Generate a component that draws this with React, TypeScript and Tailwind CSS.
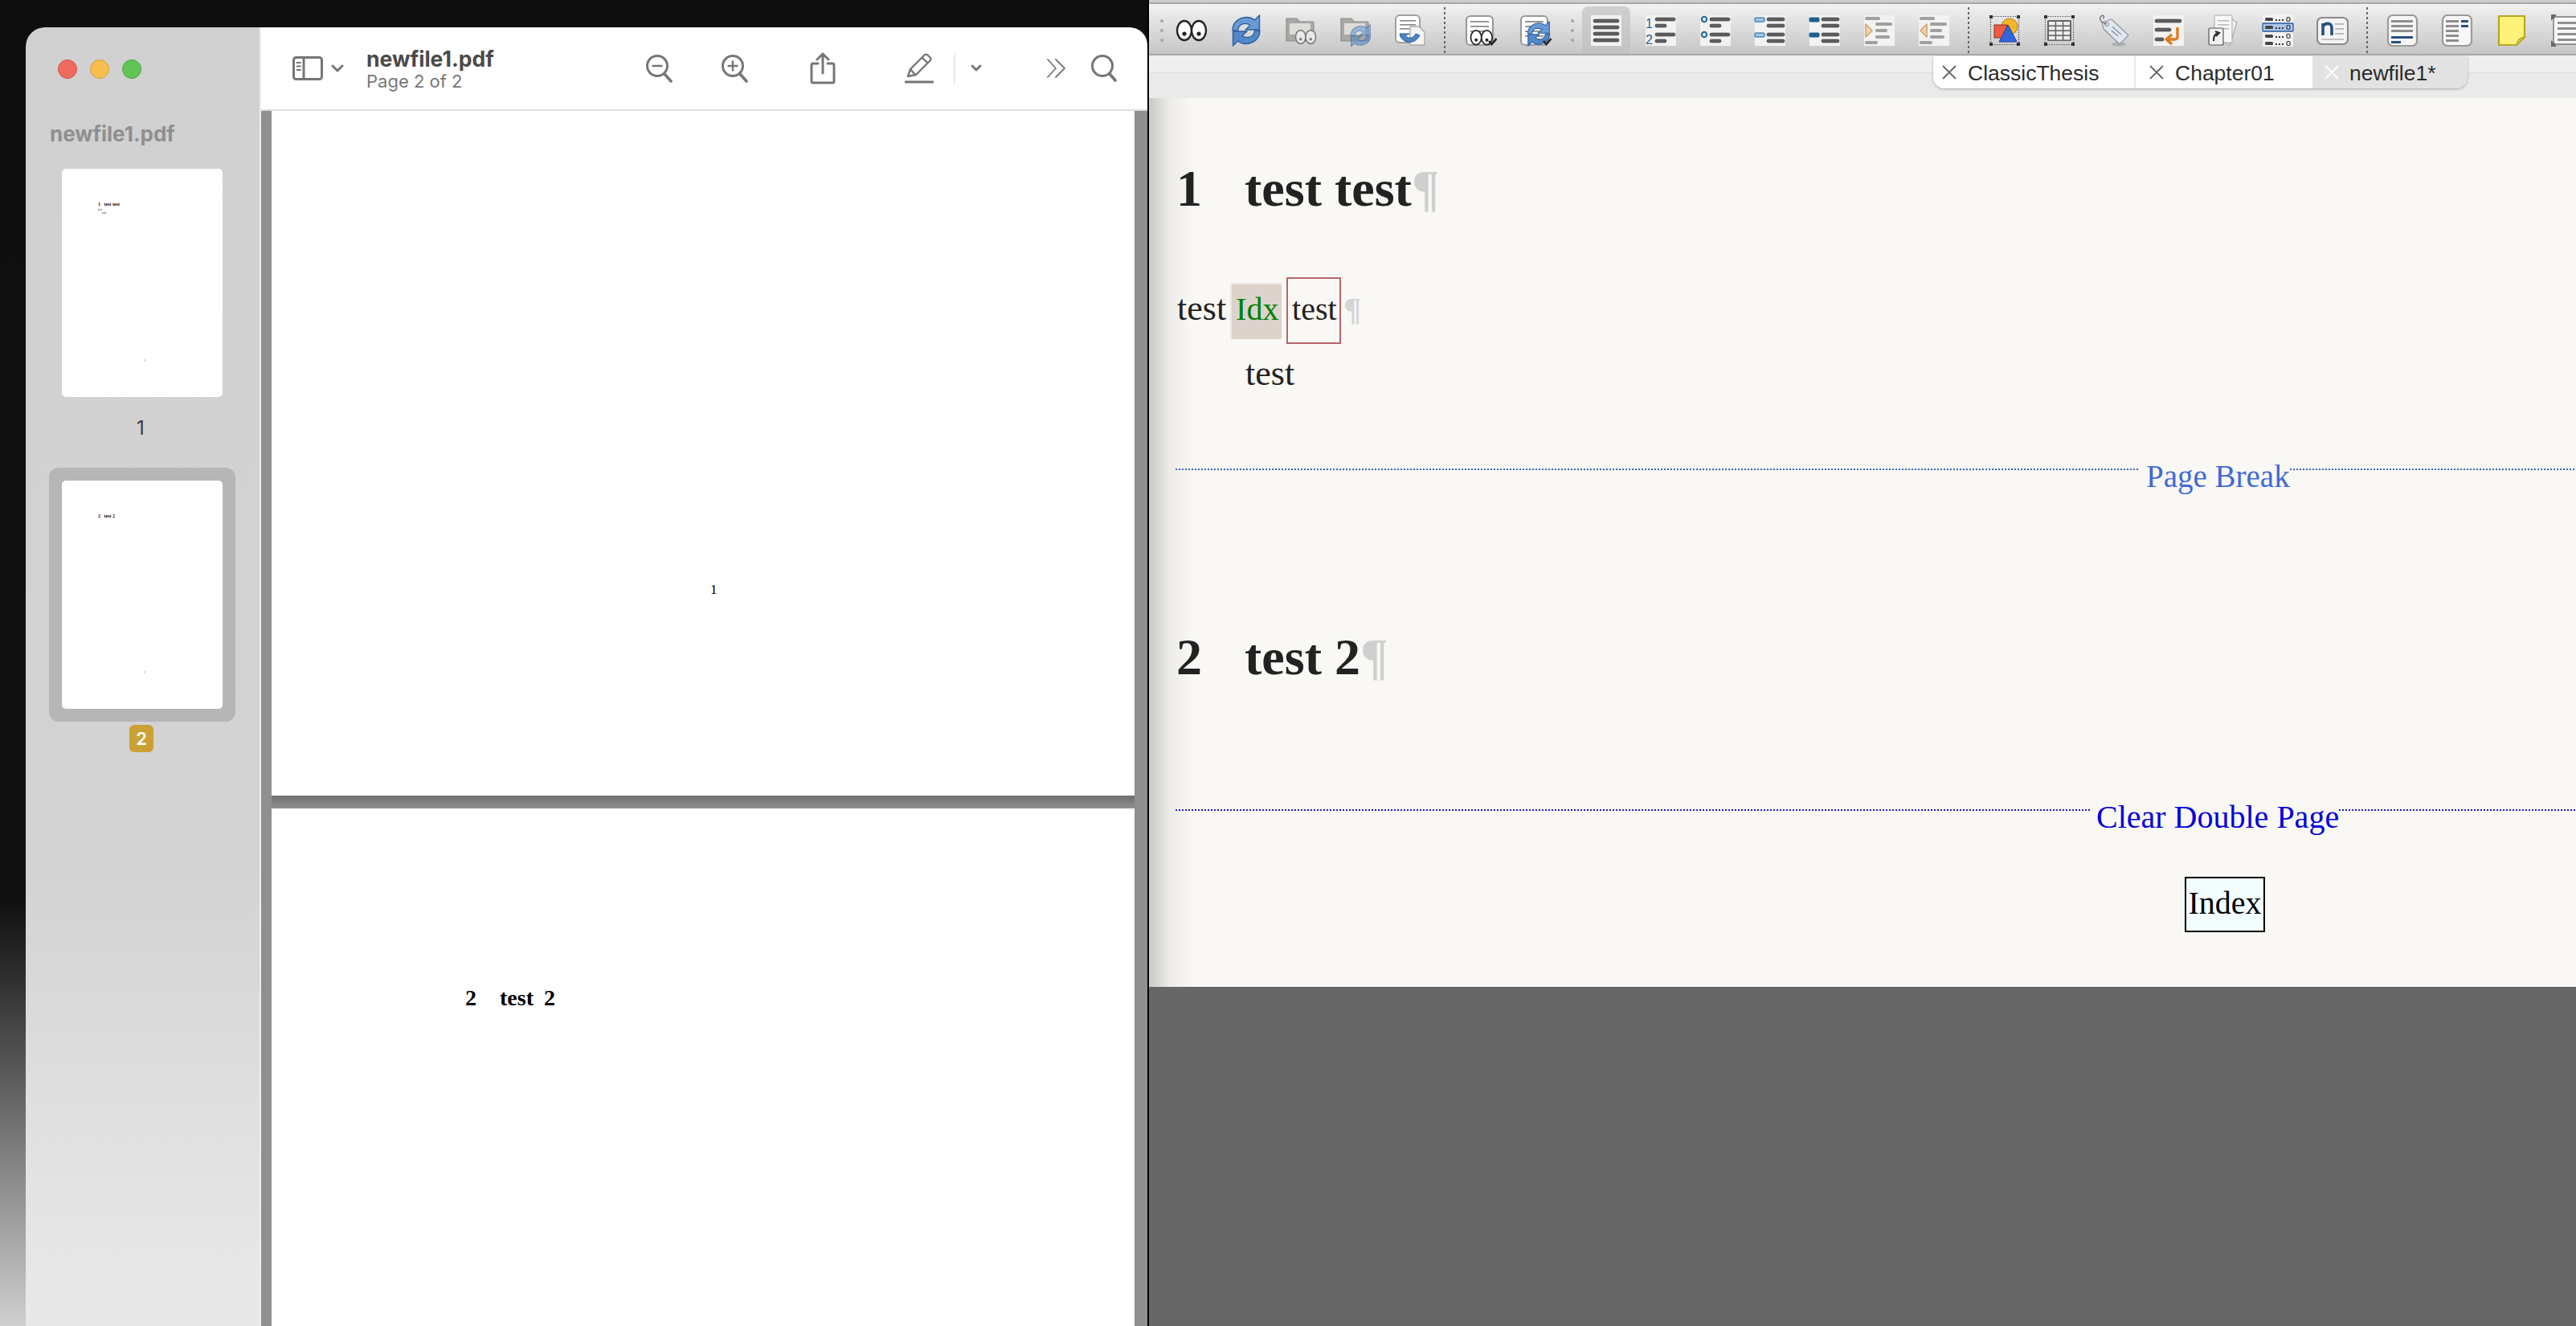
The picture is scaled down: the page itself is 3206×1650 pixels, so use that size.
import React from "react";

const I = ({ children }: { children: React.ReactNode }) => (
  <svg width="40" height="40" viewBox="0 0 40 40" fill="none">{children}</svg>
);

const Eyes = ({ x = 0, y = 0, s = 1, ink = "#222", fill = "#fff" }: { x?: number; y?: number; s?: number; ink?: string; fill?: string }) => (
  <g transform={`translate(${x} ${y}) scale(${s})`}>
    <ellipse cx="11" cy="20" rx="9" ry="12" fill={fill} stroke={ink} strokeWidth="2.4" />
    <ellipse cx="29" cy="20" rx="9" ry="12" fill={fill} stroke={ink} strokeWidth="2.4" />
    <circle cx="11" cy="24" r="2.6" fill={ink} />
    <circle cx="29" cy="24" r="2.6" fill={ink} />
  </g>
);

const SyncArrows = ({ x = 0, y = 0, s = 1, o = 1 }: { x?: number; y?: number; s?: number; o?: number }) => {
  const d = "M3 20 C3 9 12 3.5 21 3.5 C25 3.5 28 5 30.5 7 L36.5 1 L36.5 19 L19 19 L25 13.5 C19 9.5 10.5 11 9.5 20 Z";
  return (
    <g transform={`translate(${x} ${y}) scale(${s})`} opacity={o}>
      <path d={d} fill="#6a9ad6" stroke="#2b5f9f" strokeWidth="1.4" strokeLinejoin="round" />
      <path d={d} fill="#5288c9" stroke="#2b5f9f" strokeWidth="1.4" strokeLinejoin="round" transform="rotate(180 20 20)" />
    </g>
  );
};

const Folder = () => (
  <g>
    <path d="M2 5 h13 l3 4 h17 a1 1 0 0 1 1 1 v22 a1 1 0 0 1 -1 1 H2 Z" fill="#a8a8a4" stroke="#8e8e8a" strokeWidth="1.2" />
    <rect x="6" y="11" width="26" height="14" fill="#dddcd8" />
  </g>
);

const DocLines = ({ n = 4 }: { n?: number }) => (
  <g>
    <rect x="2" y="2" width="33" height="36" rx="5" fill="#fff" stroke="#9a9a9a" strokeWidth="2.2" />
    {Array.from({ length: n }).map((_, i) => (
      <rect key={i} x="7" y={8 + i * 6} width="23" height="1.8" fill="#8c8c8c" />
    ))}
  </g>
);

const Check = () => <path d="M30 33 l3.5 4 l6 -7" stroke="#222" strokeWidth="2.6" fill="none" />;

const Panel = ({ h = 38 }: { h?: number }) => <rect x="1" y={20 - h / 2} width="38" height={h} fill="#f2f2f0" />;

const Bar = ({ x, y, w, c = "#5f5f5f" }: { x: number; y: number; w: number; c?: string }) => (
  <rect x={x} y={y} width={w} height="4" rx="1.8" fill={c} stroke="#333" strokeOpacity={c === "#5f5f5f" ? 0.9 : 0} strokeWidth="0.6" />
);

const ListPlain = () => (
  <I>
    <Panel />
    <Bar x={4} y={6} w={32} />
    <Bar x={4} y={14} w={32} />
    <Bar x={4} y={22} w={32} />
    <Bar x={4} y={30} w={32} />
  </I>
);

const ListNum = () => (
  <I>
    <Panel />
    <text x="1" y="17" fontFamily="'Liberation Sans', sans-serif" fontSize="16" fill="#2a6496">1</text>
    <text x="1" y="37" fontFamily="'Liberation Sans', sans-serif" fontSize="16" fill="#2a6496">2</text>
    <Bar x={13} y={4} w={25} />
    <Bar x={13} y={12} w={14} />
    <Bar x={13} y={23} w={25} />
    <Bar x={13} y={31} w={14} />
  </I>
);

const ListBullet = () => (
  <I>
    <Panel />
    <circle cx="6" cy="6" r="3.2" stroke="#2a6496" strokeWidth="2" fill="#d8e8f5" />
    <circle cx="6" cy="25" r="3.2" stroke="#2a6496" strokeWidth="2" fill="#d8e8f5" />
    <Bar x={13} y={4} w={25} />
    <Bar x={13} y={12} w={14} />
    <Bar x={13} y={23} w={25} />
    <Bar x={13} y={31} w={14} />
  </I>
);

const ListLabel = ({ solid }: { solid?: boolean }) => (
  <I>
    <Panel />
    <rect x="1" y="4" width="12" height="5" rx="1" fill={solid ? "#1d6090" : "#9cc7ea"} stroke="#1d6090" />
    <rect x="1" y="23" width="12" height="5" rx="1" fill={solid ? "#1d6090" : "#9cc7ea"} stroke="#1d6090" />
    <Bar x={16} y={4} w={22} />
    <Bar x={16} y={12} w={22} />
    <Bar x={16} y={23} w={22} />
    <Bar x={16} y={31} w={22} />
  </I>
);

const Indent = ({ out }: { out?: boolean }) => (
  <I>
    <Panel />
    <Bar x={2} y={3} w={19} c="#a0a0a0" />
    <Bar x={15} y={10} w={21} c="#a0a0a0" />
    <Bar x={15} y={18} w={15} c="#a0a0a0" />
    <Bar x={15} y={26} w={18} c="#a0a0a0" />
    <Bar x={2} y={33} w={16} c="#a0a0a0" />
    <path d={out ? "M11 12 L3 20 L11 28 Z" : "M3 12 L11 20 L3 28 Z"} fill="#f0d5ae" stroke="#d2a36a" strokeWidth="1.6" strokeLinejoin="round" />
  </I>
);

const Handles = () => (
  <g>
    <rect x="2.5" y="2.5" width="35" height="35" stroke="#555" strokeWidth="1.2" strokeDasharray="1.5 1.5" />
    <rect x="1" y="1" width="4" height="4" fill="#333" />
    <rect x="35" y="1" width="4" height="4" fill="#333" />
    <rect x="1" y="35" width="4" height="4" fill="#333" />
    <rect x="35" y="35" width="4" height="4" fill="#333" />
  </g>
);

const Shapes = () => (
  <I>
    <Handles />
    <circle cx="26" cy="15" r="10" fill="#f5b62c" stroke="#a87a14" />
    <rect x="7" y="13" width="16" height="16" fill="#ee5a44" stroke="#92301f" />
    <path d="M24 13 L35 34 H13 Z" fill="#3366dd" stroke="#1d3c8c" strokeLinejoin="round" />
  </I>
);

const TableIcon = () => (
  <I>
    <Handles />
    <rect x="5" y="7" width="30" height="26" rx="1.5" fill="#666" />
    {[0, 1, 2, 3].map((r) =>
      [0, 1, 2].map((c) => <rect key={`${r}${c}`} x={7 + c * 9.2} y={9 + r * 6} width="7.6" height="4.4" fill="#eeeeee" />)
    )}
  </I>
);

const Tag = () => (
  <I>
    <ellipse cx="26" cy="37" rx="9" ry="2.5" fill="#999" opacity="0.6" />
    <path d="M5 10 L17 6 L38 26 L27 37 L7 18 Z" fill="#dfe6ee" stroke="#8d99a5" strokeWidth="1.2" strokeLinejoin="round" />
    <circle cx="11" cy="12" r="2.4" fill="#fff" stroke="#777" />
    <path d="M11 12 C3 10 1 5 4 2 C7 0 9 3 6 5" stroke="#777" strokeWidth="1.4" />
    <path d="M18 15 l4 4 M17 20 l8 7 M21 18 l8 7" stroke="#8795a5" strokeWidth="1.5" />
  </I>
);

const WrapIcon = () => (
  <I>
    <Panel />
    <Bar x={3} y={6} w={33} />
    <Bar x={3} y={17} w={20} />
    <Bar x={3} y={29} w={11} />
    <path d="M31 16 V28 a3 3 0 0 1 -3 3 H20 M24 25 L17 31 L24 37" stroke="#e07a1f" strokeWidth="3.4" fill="none" strokeLinejoin="round" />
  </I>
);

const Pages = () => (
  <I>
    <path d="M28 4 L37 10 L28 38 L20 34 Z" fill="#f2f2f2" stroke="#9a9a9a" />
    <rect x="9" y="1" width="22" height="34" rx="1.5" fill="#f7f7f7" stroke="#a5a5a5" />
    <rect x="13" y="7" width="14" height="1.5" fill="#bbb" />
    <rect x="13" y="12" width="14" height="1.5" fill="#bbb" />
    <rect x="13" y="17" width="14" height="1.5" fill="#bbb" />
    <rect x="2" y="17" width="18" height="21" rx="2" fill="#f0f0f0" stroke="#555" strokeWidth="1.2" />
    <path d="M8 33 C8 27 10 24 13 23 M10 21 L15 23 L11 27" stroke="#333" strokeWidth="2.2" fill="none" />
  </I>
);

const FieldRow = ({ y, hi }: { y: number; hi?: boolean }) => (
  <g>
    {hi && <rect x="1" y={y - 3} width="38" height="10" rx="1" fill="#a9c6ea" stroke="#2a5a9a" strokeWidth="1.3" />}
    <rect x="4" y={y} width="10" height="4" rx="1.5" fill="#444" />
    <rect x="17" y={y + 2} width="2" height="2" fill="#333" />
    <rect x="21" y={y + 2} width="2" height="2" fill="#333" />
    <rect x="25" y={y + 2} width="2" height="2" fill="#333" />
    <rect x="31" y={y - 0.5} width="4" height="5" rx="1.5" stroke="#333" strokeWidth="1.2" />
  </g>
);

const Fields = () => (
  <I>
    <Panel h={40} />
    <FieldRow y={4} />
    <FieldRow y={14} hi />
    <FieldRow y={25} />
    <FieldRow y={34} />
  </I>
);

const NoteN = () => (
  <I>
    <rect x="1" y="4" width="38" height="33" rx="6" fill="#f4f4f4" stroke="#8a8a8a" strokeWidth="2.2" />
    <path d="M8 26 V11 M8 15 C10 10 19 10 19 16 V26" stroke="#27507f" strokeWidth="3.6" fill="none" />
    <rect x="23" y="11" width="11" height="2" fill="#bcbcbc" />
    <rect x="23" y="17" width="11" height="2" fill="#bcbcbc" />
    <rect x="23" y="23" width="11" height="2" fill="#bcbcbc" />
    <rect x="6" y="30" width="28" height="2" fill="#c4c4c4" />
  </I>
);

const Para = ({ v }: { v: number }) => (
  <I>
    <rect x="2" y="1" width="36" height="38" rx="6" fill="#f7f7f7" stroke="#9a9a9a" strokeWidth="2.2" />
    {v === 0 ? (
      <>
        <rect x="6" y="7" width="27" height="3" fill="#8e8e8e" />
        <rect x="6" y="13" width="27" height="3" fill="#8e8e8e" />
        <rect x="6" y="19" width="27" height="3" fill="#8e8e8e" />
        <rect x="6" y="27" width="27" height="3" fill="#27507f" />
        <rect x="6" y="33" width="12" height="3" fill="#27507f" />
      </>
    ) : (
      <>
        <rect x="6" y="7" width="16" height="3" fill="#8e8e8e" />
        <rect x="6" y="13" width="16" height="3" fill="#8e8e8e" />
        <rect x="6" y="19" width="16" height="3" fill="#8e8e8e" />
        <rect x="6" y="25" width="16" height="3" fill="#8e8e8e" />
        <rect x="6" y="31" width="16" height="3" fill="#8e8e8e" />
        <rect x="25" y="7" width="9" height="3" fill="#27507f" />
        <rect x="25" y="13" width="9" height="3" fill="#27507f" />
      </>
    )}
  </I>
);

const Sticky = () => (
  <I>
    <path d="M4 2 H36 V28 L26 38 H4 Z" fill="#fff27a" stroke="#b5a824" strokeWidth="2.2" strokeLinejoin="round" />
    <path d="M26 38 C27 33 28 30 36 28 Z" fill="#d8cc63" stroke="#b5a824" strokeWidth="1.4" />
  </I>
);

const Frame = () => (
  <I>
    <rect x="4" y="3" width="34" height="34" rx="3" fill="#f7f7f7" stroke="#777" strokeWidth="1.4" />
    <path d="M1 0 H8 L1 8 Z M1 40 H8 L1 32 Z" fill="#666" />
    <rect x="9" y="9" width="24" height="3" fill="#8e8e8e" />
    <rect x="9" y="16" width="24" height="3" fill="#8e8e8e" />
    <rect x="9" y="23" width="24" height="3" fill="#8e8e8e" />
    <rect x="9" y="30" width="24" height="3" fill="#8e8e8e" />
  </I>
);

const Btn = ({ children, className = "" }: { children: React.ReactNode; className?: string }) => (
  <div className={`w-[68px] shrink-0 pt-[3px] flex items-center justify-center ${className}`}>{children}</div>
);

const Sep = () => (
  <div className="w-[18px] shrink-0 flex justify-center pt-[4px]">
    <div className="h-full w-[2px] bg-[repeating-linear-gradient(to_bottom,#666666_0,#666666_3px,transparent_3px,transparent_6px)]" />
  </div>
);

const Grip = ({ className = "" }: { className?: string }) => (
  <div className={`shrink-0 flex flex-col items-center justify-center gap-[8px] pt-[3px] ${className}`}>
    <div className="w-[4px] h-[4px] rounded-full bg-[#a6a6a6]" />
    <div className="w-[4px] h-[4px] rounded-full bg-[#a6a6a6]" />
    <div className="w-[4px] h-[4px] rounded-full bg-[#a6a6a6]" />
  </div>
);

const Toolbar = () => (
  <div>
    <div className="h-[3px] bg-[#cdcdcd]" />
    <div className="h-[2px] bg-[#a9a9a9]" />
    <div className="h-[62px] flex overflow-hidden border-b-2 border-[#a8a8a8] box-content bg-[linear-gradient(to_bottom,#f2f2f2,#e6e6e6_25%,#c6c6c6)]">
      <Grip className="w-[8px] ml-[12px]" />
      <Btn className="ml-[-1px]"><I><Eyes /></I></Btn>
      <Btn><I><SyncArrows /></I></Btn>
      <Btn><I><Folder /><Eyes x={12} y={14} s={0.7} ink="#7d7d7d" fill="#e8e8e8" /></I></Btn>
      <Btn><I><Folder /><SyncArrows x={12} y={12} s={0.72} o={0.6} /></I></Btn>
      <Btn>
        <I>
          <rect x="2" y="1" width="30" height="34" rx="5" fill="#fff" stroke="#a0a0a0" strokeWidth="2" />
          <rect x="7" y="7" width="20" height="1.6" fill="#888" />
          <rect x="7" y="12" width="20" height="1.6" fill="#888" />
          <rect x="7" y="17" width="12" height="1.6" fill="#888" />
          <path d="M20 15 H31 L38 22 V38 H20 Z" fill="#f5f5f5" stroke="#aaa" strokeWidth="1.4" />
          <path d="M8 28 C14 37 26 37 32 26 L27 24 C24 30 18 31 14 26 L19 24 H7 Z" fill="#4d83c5" stroke="#2b5f9f" />
        </I>
      </Btn>
      <Sep />
      <Btn className="ml-[2px]"><I><DocLines /><Eyes x={6} y={14} s={0.74} /><Check /></I></Btn>
      <Btn><I><DocLines /><SyncArrows x={8} y={8} s={0.8} /><Check /></I></Btn>
      <Grip className="w-[24px]" />
      <div className="w-[60px] shrink-0 mt-[3px] rounded-t-[8px] bg-[linear-gradient(to_bottom,#cfcfcf,#c2c2c2)] flex items-center justify-center">
        <ListPlain />
      </div>
      <Btn className="ml-[4px]"><ListNum /></Btn>
      <Btn><ListBullet /></Btn>
      <Btn><ListLabel /></Btn>
      <Btn><ListLabel solid /></Btn>
      <Btn><Indent /></Btn>
      <Btn><Indent out /></Btn>
      <Sep />
      <Btn className="ml-[2px]"><Shapes /></Btn>
      <Btn><TableIcon /></Btn>
      <Btn><Tag /></Btn>
      <Btn><WrapIcon /></Btn>
      <Btn><Pages /></Btn>
      <Btn><Fields /></Btn>
      <Btn><NoteN /></Btn>
      <Sep />
      <Btn className="ml-[1px]"><Para v={0} /></Btn>
      <Btn><Para v={1} /></Btn>
      <Btn><Sticky /></Btn>
      <Btn><Frame /></Btn>
    </div>
  </div>
);

const TabX = ({ c }: { c: string }) => (
  <svg width="20" height="20" viewBox="0 0 20 20" className="shrink-0">
    <path d="M2 2 L18 18 M18 2 L2 18" stroke={c} strokeWidth="1.8" />
  </svg>
);

const Tabs = () => (
  <div className="h-[53px] pl-[976px] pt-[1px] bg-[linear-gradient(to_bottom,#efefef_21px,#dedede_21px,#dedede_22px,#eaeaea_22px)]">
    <div className="w-[665px] h-[40px] flex rounded-b-[14px] overflow-hidden shadow-[0_1px_3px_rgba(0,0,0,0.3)] font-['Liberation_Sans',sans-serif] text-[26.5px] text-[#2b2b2b]">
      <div className="w-[252px] h-full bg-white border-r-2 border-[#e6e6e6] flex items-center gap-[13px] pl-[10px]">
        <TabX c="#666666" />
        <span className="pt-[4px]">ClassicThesis</span>
      </div>
      <div className="w-[220px] h-full bg-white flex items-center gap-[13px] pl-[16px]">
        <TabX c="#666666" />
        <span className="pt-[4px]">Chapter01</span>
      </div>
      <div className="flex-1 h-full bg-[#e2e2e2] flex items-center gap-[12px] pl-[14px]">
        <TabX c="#ffffff" />
        <span className="pt-[4px]">newfile1*</span>
      </div>
    </div>
  </div>
);

const Heading = ({ n, text, className = "" }: { n: string; text: string; className?: string }) => (
  <div className={`flex font-bold text-[64px] leading-[72px] text-[#222222] ${className}`}>
    <span className="w-[86px] pl-[1px]">{n}</span>
    <span>{text}</span>
    <span className="text-[#cfcfcf]">¶</span>
  </div>
);

const BreakRow = ({ label, className, line, text, left, ml, size }: { label: string; className: string; line: string; text: string; left: string; ml: string; size: string }) => (
  <div className={`flex items-start leading-[46px] ${size} ${text} ${className}`}>
    <div className={`h-[2px] mt-[13px] ${line} ${left}`} />
    <span className={`${ml} whitespace-nowrap`}>{label}</span>
    <div className={`h-[2px] mt-[13px] flex-1 ${line}`} />
  </div>
);

const Editor = () => (
  <div className="w-[1778px] shrink-0 border-l-2 border-black flex flex-col bg-[#666666]">
    <Toolbar />
    <Tabs />
    <div className="h-[1106px] pl-[33px] pt-[77px] bg-[linear-gradient(to_right,#c9c9c7,#eeece9_26px,#faf8f5_56px)] font-['Liberation_Serif',serif]">
      <Heading n="1" text="test test" />
      <div className="mt-[74px] flex items-baseline text-[#222222]">
        <span className="text-[44px] leading-[48px] ml-[2px]">test</span>
        <span className="ml-[5px] w-[64px] h-[70px] pt-[7px] pl-[5px] bg-[#dcd4cc] border-t-2 border-l-2 border-[#ece8e2] text-[40px] leading-[48px] text-[#008000]">Idx</span>
        <span className="ml-[6px] w-[68px] h-[83px] pt-[16px] pl-[5px] border-2 border-[#b9636b] text-[40px] leading-[44px]">test</span>
        <span className="ml-[3px] text-[41px] leading-[48px] font-bold text-[#d4d4d4]">¶</span>
      </div>
      <div className="mt-[13px] pl-[87px] text-[44px] leading-[48px] text-[#222222]">test</div>
      <BreakRow label="Page Break" className="mt-[81px]" line="bg-[repeating-linear-gradient(to_right,#3f5fc4_0,#3f5fc4_2px,transparent_2px,transparent_4px)]" text="text-[#4169d8]" left="w-[1198px]" ml="ml-[10px]" size="text-[39px]" />
      <Heading n="2" text="test 2" className="mt-[166px]" />
      <BreakRow label="Clear Double Page" className="mt-[140px]" line="bg-[repeating-linear-gradient(to_right,#1a1ac8_0,#1a1ac8_2px,transparent_2px,transparent_4px)]" text="text-[#0000dd]" left="w-[1138px]" ml="ml-[8px]" size="text-[40px]" />
      <div className="mt-[51px] ml-[1256px] w-[100px] h-[69px] pt-[8px] border-2 border-black bg-[#f2fdfe] text-[40px] leading-[46px] text-black text-center">Index</div>
    </div>
  </div>
);

const MiniPage = ({ lines, num }: { lines: React.ReactNode; num: string }) => (
  <div className="w-[200px] h-[284px] bg-white rounded-[5px] flex flex-col pl-[45px] pt-[41px] font-['Liberation_Serif',serif] text-black">
    <div className="h-[195px] text-[6px] leading-[7px]">{lines}</div>
    <div className="pl-[57px] text-[4px] leading-[6px] text-[#555555]">{num}</div>
  </div>
);

const Sidebar = () => (
  <div className="w-[293px] shrink-0 border-r-2 border-[#eeeeee] rounded-tl-[24px] flex flex-col items-start bg-[linear-gradient(to_bottom,#d0d0d0,#d3d3d3_65%,#e8e8e8_97%)] font-['Inter',sans-serif]">
    <div className="mt-[40px] ml-[40px] flex gap-[16px]">
      <div className="w-[24px] h-[24px] rounded-full bg-[#ee6a5f] border border-[#cf5348]" />
      <div className="w-[24px] h-[24px] rounded-full bg-[#f6bd4f] border border-[#d9a13c]" />
      <div className="w-[24px] h-[24px] rounded-full bg-[#61c454] border border-[#4ba73f]" />
    </div>
    <div className="mt-[53px] ml-[30px] text-[26px] leading-[32px] font-bold text-[#8f8f8f]">newfile1.pdf</div>
    <div className="mt-[27px] ml-[45px]">
      <MiniPage
        num="1"
        lines={
          <>
            <div className="font-bold">1 &nbsp; test test</div>
            <div className="text-[3.5px] leading-[4px] mt-[1px]">test</div>
            <div className="text-[3.5px] leading-[4px] pl-[5px]">test</div>
          </>
        }
      />
    </div>
    <div className="mt-[24px] ml-[138px] text-[24px] leading-[30px] text-[#3a3a3a]">1</div>
    <div className="mt-[34px] ml-[29px] p-[16px] rounded-[12px] bg-[#b6b6b6]">
      <MiniPage num="1" lines={<div className="font-bold">2 &nbsp; test 2</div>} />
    </div>
    <div className="mt-[4px] ml-[129px] w-[30px] h-[34px] rounded-[6px] bg-[#cba135] text-white text-[22px] font-semibold flex items-center justify-center">2</div>
  </div>
);

const stroke = { stroke: "#767676", strokeWidth: 3, fill: "none", strokeLinecap: "round" as const, strokeLinejoin: "round" as const };

const Zoom = ({ plus }: { plus?: boolean }) => (
  <svg width="36" height="36" viewBox="0 0 36 36">
    <circle cx="15" cy="15" r="12.5" {...stroke} />
    <path d="M24 25 L32 34" {...stroke} strokeWidth={3.6} />
    <path d="M9.5 15 H20.5" {...stroke} strokeWidth={2.4} />
    {plus && <path d="M15 9.5 V20.5" {...stroke} strokeWidth={2.4} />}
  </svg>
);

const PdfToolbar = () => (
  <div className="h-[104px] shrink-0 flex items-center bg-white border-b-2 border-[#dddddd] pl-[39px] rounded-tr-[20px] font-['Inter',sans-serif]">
    <svg width="38" height="30" viewBox="0 0 38 30" className="shrink-0">
      <rect x="1.5" y="1.5" width="35" height="27" rx="3" {...stroke} />
      <path d="M14 1.5 V28.5" {...stroke} />
      <path d="M5.5 8 H10 M5.5 12.5 H10 M5.5 17 H10" {...stroke} strokeWidth={2} />
    </svg>
    <svg width="16" height="12" viewBox="0 0 16 12" className="ml-[10px] shrink-0">
      <path d="M2 3 L8 9 L14 3" {...stroke} />
    </svg>
    <div className="ml-[28px] w-[347px] shrink-0 pt-[3px]">
      <div className="text-[26.5px] leading-[30px] font-bold text-[#4a4a4a]">newfile1.pdf</div>
      <div className="text-[22px] leading-[27px] text-[#777777]">Page 2 of 2</div>
    </div>
    <Zoom />
    <div className="ml-[58px] flex"><Zoom plus /></div>
    <svg width="32" height="40" viewBox="0 0 32 40" className="ml-[75px] shrink-0">
      <path d="M10 14 H4 a2 2 0 0 0 -2 2 V36 a2 2 0 0 0 2 2 H28 a2 2 0 0 0 2 -2 V16 a2 2 0 0 0 -2 -2 H22" {...stroke} />
      <path d="M16 26 V2 M9 9 L16 2 L23 9" {...stroke} />
    </svg>
    <svg width="36" height="38" viewBox="0 0 36 38" className="ml-[86px] shrink-0">
      <path d="M4 29 L7 20 L24 3 A3 3 0 0 1 29 3 L31 5 A3 3 0 0 1 31 10 L14 27 Z M22 6 L28 12 M7 20 L13 27" {...stroke} strokeWidth={2.4} />
      <path d="M1 36 H35" {...stroke} />
    </svg>
    <div className="ml-[25px] w-[2px] h-[39px] bg-[#eaeaea] shrink-0" />
    <svg width="16" height="12" viewBox="0 0 16 12" className="ml-[18px] shrink-0">
      <path d="M3 3 L8 8 L13 3" {...stroke} />
    </svg>
    <svg width="24" height="24" viewBox="0 0 24 24" className="ml-[80px] shrink-0">
      <path d="M1 1 L11 12 L1 23 M11 1 L22 12 L11 23" {...stroke} strokeWidth={1.8} />
    </svg>
    <svg width="32" height="34" viewBox="0 0 32 34" className="ml-[31px] shrink-0"><circle cx="14" cy="14" r="12.5" {...stroke} /><path d="M23 24 L30 32" {...stroke} strokeWidth={3.6} /></svg>
  </div>
);

const PdfPages = () => (
  <div className="flex-1 overflow-hidden pl-[13px] pr-[16px] bg-[#8f8f8f] font-['Liberation_Serif',serif] text-black">
    <div className="h-[852px] bg-white pt-[586px] pl-[546px] text-[17px] leading-[20px]">1</div>
    <div className="h-[16px] bg-[linear-gradient(to_bottom,#6f6f6f,#8f8f8f)]" />
    <div className="h-[644px] bg-white pt-[220px] pl-[241px] flex text-[28px] leading-[32px] font-bold">
      <span className="w-[43px]">2</span>
      <span className="[word-spacing:6px]">test 2</span>
    </div>
  </div>
);

export default function App() {
  return (
    <div className="w-[3206px] h-[1650px] flex overflow-hidden bg-[linear-gradient(to_bottom,#0e0e0e,#101010_1120px,#333333_1230px,#808080_1440px,#cfcfcf_1650px)]">
      <div className="w-[1396px] h-[1616px] mt-[34px] ml-[32px] shrink-0 flex overflow-hidden rounded-t-[22px]">
        <Sidebar />
        <div className="flex-1 flex flex-col min-w-0">
          <PdfToolbar />
          <PdfPages />
        </div>
      </div>
      <Editor />
    </div>
  );
}
